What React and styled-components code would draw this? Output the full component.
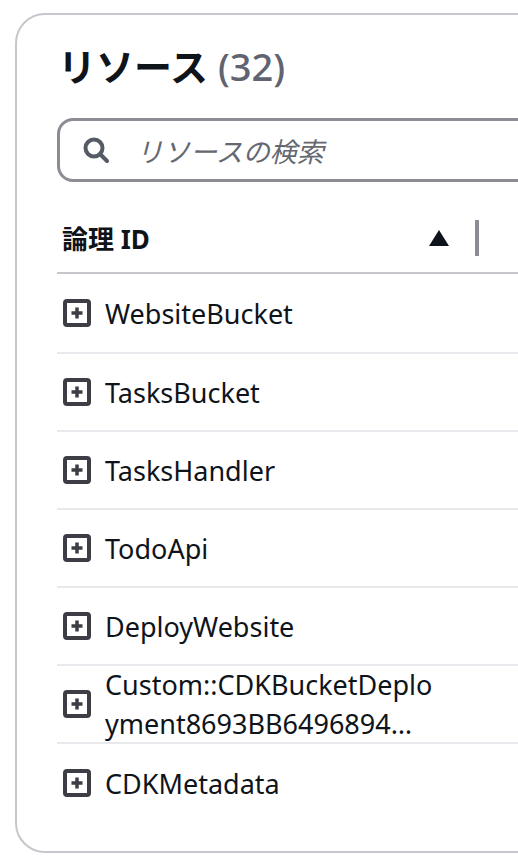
import React from "react";
import styled, { createGlobalStyle } from "styled-components";

const Global = createGlobalStyle`
  html, body { margin: 0; padding: 0; background: #ffffff; overflow: hidden; }
  body { font-family: "Noto Sans", "Noto Sans CJK JP", sans-serif; color: #0f141a; }
`;

const Card = styled.section`
  box-sizing: border-box;
  margin: 13px 0 0 15px;
  width: 620px;
  height: 840px;
  border: 2px solid #c6c6cd;
  border-radius: 30px;
  padding: 24px 0 0 40px;
  display: flex;
  flex-direction: column;
`;

const Title = styled.h2`
  margin: 0;
  font-size: 38px;
  line-height: 54px;
  font-weight: 700;
  padding-left: 1px;
  color: #0f141a;
  font-family: "Noto Sans", "Noto Sans CJK JP", sans-serif;
`;

const Count = styled.span`
  font-weight: 500;
  color: #5f6470;
`;

const Search = styled.label`
  box-sizing: border-box;
  margin-top: 25px;
  height: 64px;
  border: 3px solid #8c8c94;
  border-radius: 16px;
  display: flex;
  align-items: center;
  gap: 26px;
  padding-left: 22px;
`;

const Placeholder = styled.span`
  font-size: 27px;
  font-style: italic;
  color: #656871;
  font-family: "Noto Sans CJK JP", sans-serif;
`;

const Table = styled.div`
  display: flex;
  flex-direction: column;
  margin-top: 21px;
`;

const HeadRow = styled.div`
  display: flex;
  align-items: center;
  height: 71px;
  box-sizing: border-box;
  border-bottom: 2px solid #c6c6cd;
  padding-left: 5px;
`;

const HeadLabel = styled.span`
  font-size: 26px;
  font-weight: 700;
  width: 367px;
  font-family: "Noto Sans", "Noto Sans CJK JP", sans-serif;
`;

const SortIcon = styled.span`
  width: 0;
  height: 0;
  border-left: 10px solid transparent;
  border-right: 10px solid transparent;
  border-bottom: 16px solid #0f141a;
`;

const Divider = styled.span`
  width: 4px;
  height: 36px;
  background: #8c8c94;
  margin-left: 26px;
`;

const Row = styled.div`
  display: flex;
  align-items: center;
  gap: 14px;
  box-sizing: border-box;
  height: ${(p) => (p.$first ? "80px" : "78px")};
  border-bottom: ${(p) => (p.$last ? "none" : "2px solid #e9e9ed")};
  padding-left: 6px;
`;

const Name = styled.span`
  font-size: 27px;
  line-height: 39px;
  color: #0f141a;
`;

const ExpandBox = styled.span`
  box-sizing: border-box;
  flex: none;
  width: 28px;
  height: 28px;
  border: 4px solid #3d3d45;
  border-radius: 4px;
  display: flex;
  align-items: center;
  justify-content: center;
`;

const SearchIcon = () => (
  <svg width="28" height="28" viewBox="0 0 28 28" fill="none">
    <circle cx="12" cy="12" r="8.5" stroke="#545b64" strokeWidth="4" />
    <path d="M18 18 L25 25" stroke="#545b64" strokeWidth="4" strokeLinecap="round" />
  </svg>
);

const Plus = () => (
  <svg width="12" height="12" viewBox="0 0 12 12">
    <path d="M6 0.5 V11.5 M0.5 6 H11.5" stroke="#3d3d45" strokeWidth="3.5" />
  </svg>
);

const rows = [
  ["WebsiteBucket"],
  ["TasksBucket"],
  ["TasksHandler"],
  ["TodoApi"],
  ["DeployWebsite"],
  ["Custom::CDKBucketDeplo", "yment8693BB6496894…"],
  ["CDKMetadata"],
];

export default function App() {
  return (
    <>
      <Global />
      <Card>
        <Title>
          リソース <Count>(32)</Count>
        </Title>
        <Search>
          <SearchIcon />
          <Placeholder>リソースの検索</Placeholder>
        </Search>
        <Table>
          <HeadRow>
            <HeadLabel>論理 ID</HeadLabel>
            <SortIcon />
            <Divider />
          </HeadRow>
          {rows.map((lines, i) => (
            <Row key={lines[0]} $first={i === 0} $last={i === rows.length - 1}>
              <ExpandBox>
                <Plus />
              </ExpandBox>
              <Name>
                {lines.map((l, j) => (
                  <React.Fragment key={l}>
                    {j > 0 && <br />}
                    {l}
                  </React.Fragment>
                ))}
              </Name>
            </Row>
          ))}
        </Table>
      </Card>
    </>
  );
}
